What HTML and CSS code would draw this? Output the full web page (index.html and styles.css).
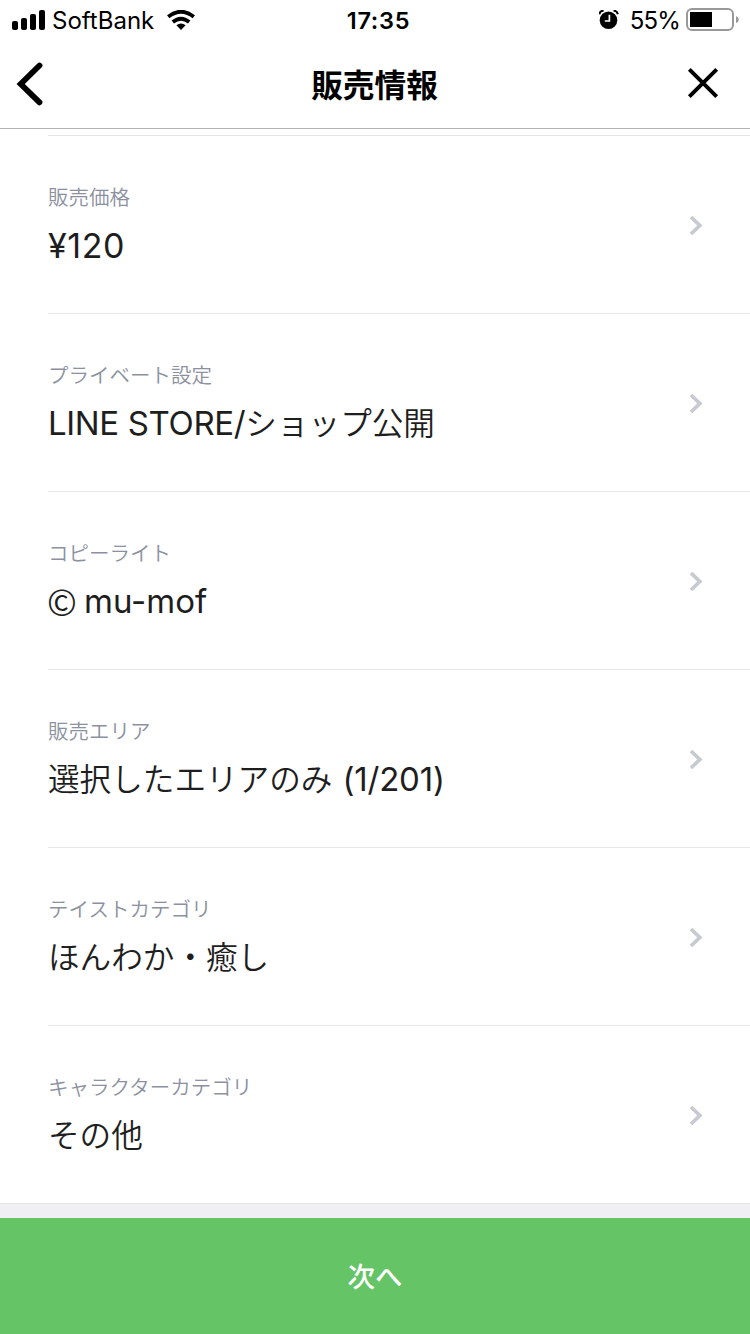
FILE: index.html
```html
<!DOCTYPE html>
<html lang="ja">
<head>
<meta charset="utf-8">
<title>販売情報</title>
<link rel="stylesheet" href="styles.css">
</head>
<body>
<div class="screen">
  <div class="status">
    <div class="status-left">
      <svg class="signal" width="34" height="20" viewBox="0 0 34 20"><rect x="0" y="11" width="6" height="9" rx="2"/><rect x="9" y="8" width="6" height="12" rx="2"/><rect x="18" y="4" width="6" height="16" rx="2"/><rect x="27" y="0" width="6" height="20" rx="2"/></svg>
      <span class="carrier">SoftBank</span>
      <svg class="wifi" width="28" height="20" viewBox="0 0 28 20"><g fill="none" stroke="#000" stroke-width="3.8"><path d="M1.2 6.7Q14 -3.3 26.8 6.7"/><path d="M5.8 12Q14 5.4 22.2 12"/></g><path d="M9.4 15.3Q14 11.6 18.6 15.3L14 20Z"/></svg>
    </div>
    <span class="time">17:35</span>
    <div class="status-right">
      <svg class="alarm" width="20" height="20" viewBox="0 0 20 20"><circle cx="9.5" cy="10.2" r="8.8"/><path d="M0.3 4.2Q1 .8 4.7.6M18.9 4.2Q18.2 .8 14.5.6" fill="none" stroke="#000" stroke-width="2"/><path d="M10.4 4.8V11H5.8" fill="none" stroke="#fff" stroke-width="1.7"/></svg>
      <span class="percent">55%</span>
      <svg class="battery" width="53" height="24" viewBox="0 0 53 24"><rect x="1" y="1" width="46" height="21" rx="5" fill="#fff" stroke="#999" stroke-width="2"/><rect x="4" y="4" width="22" height="15"/><path d="M50 8Q52.8 9 52.8 11.5T50 15Z" fill="#999"/></svg>
    </div>
  </div>
  <header class="header">
    <svg class="back" width="28" height="44" viewBox="0 0 28 44"><path d="M23.5 3.5L4.7 22 23.5 40.3" fill="none" stroke="#000" stroke-width="5.8" stroke-linecap="round"/></svg>
    <h1 class="title">販売情報</h1>
    <svg class="close" width="32" height="32" viewBox="0 0 32 32"><path d="M2.3 2.3L29.7 29.7M29.7 2.3L2.3 29.7" stroke="#000" stroke-width="3.9"/></svg>
  </header>
  <main class="list">
    <div class="row"><div><div class="label">販売価格</div><div class="value"><span class="latin price">¥120</span></div></div><svg class="chevron" width="14" height="20" viewBox="0 0 14 20"><path d="M2 2L10.8 10.5 2 19"/></svg></div>
    <div class="row"><div><div class="label">プライベート設定</div><div class="value"><span class="latin store">LINE STORE/</span>ショップ公開</div></div><svg class="chevron" width="14" height="20" viewBox="0 0 14 20"><path d="M2 2L10.8 10.5 2 19"/></svg></div>
    <div class="row"><div><div class="label">コピーライト</div><div class="value"><span class="copyright">©</span><span class="latin">mu-mof</span></div></div><svg class="chevron" width="14" height="20" viewBox="0 0 14 20"><path d="M2 2L10.8 10.5 2 19"/></svg></div>
    <div class="row"><div><div class="label">販売エリア</div><div class="value">選択したエリアのみ<span class="latin area">&nbsp;(1/201)</span></div></div><svg class="chevron" width="14" height="20" viewBox="0 0 14 20"><path d="M2 2L10.8 10.5 2 19"/></svg></div>
    <div class="row"><div><div class="label">テイストカテゴリ</div><div class="value">ほんわか・癒し</div></div><svg class="chevron" width="14" height="20" viewBox="0 0 14 20"><path d="M2 2L10.8 10.5 2 19"/></svg></div>
    <div class="row"><div><div class="label">キャラクターカテゴリ</div><div class="value">その他</div></div><svg class="chevron" width="14" height="20" viewBox="0 0 14 20"><path d="M2 2L10.8 10.5 2 19"/></svg></div>
  </main>
  <div class="gap"></div>
  <button class="next">次へ</button>
</div>
</body>
</html>
```
FILE: styles.css
```css
* { box-sizing: border-box; }
body { margin: 0; background: #fff; font-family: Inter, "Noto Sans CJK JP", sans-serif; }
svg { display: block; flex: none; }
.screen { width: 750px; height: 1334px; display: flex; flex-direction: column; overflow: hidden; }
.status { height: 40px; display: grid; grid-template-columns: 1fr auto 1fr; align-items: center; padding: 0 11px 0 12px; font-size: 24px; line-height: 38px; color: #000; }
.status-left, .status-right { display: flex; align-items: center; }
.status-right { justify-content: flex-end; }
.carrier { margin-left: 6px; padding-top: 2px; letter-spacing: 0; }
.wifi { margin-left: 13px; }
.time { font-weight: 600; font-size: 23.5px; letter-spacing: 0.7px; padding: 2px 0 0 6px; }
.percent { margin: 0 6px 0 11px; padding-top: 2px; font-size: 24px; letter-spacing: -0.8px; }
.header { height: 89px; display: grid; grid-template-columns: 1fr auto 1fr; align-items: center; padding: 0 31px 0 16px; border-bottom: 1px solid #b2b2b2; }
.title { margin: 0; padding: 0 0 2px 14px; font-size: 31.7px; font-weight: 700; line-height: 40px; font-family: "Noto Sans CJK JP", sans-serif; }
.close { justify-self: end; margin-bottom: 2px; }
.list { margin-left: 48px; border-top: 1px solid #e5e5e5; margin-top: 6px; }
.row { height: 178px; display: flex; justify-content: space-between; align-items: flex-start; padding: 45px 47px 0 0; border-bottom: 1px solid #e8e8ea; }
.row:last-child { border-bottom: 0; height: 177px; }
.label { font-family: "Noto Sans CJK JP", sans-serif; font-size: 20.5px; font-weight: 350; line-height: 30px; color: #8c919f; }
.value { font-family: "Noto Sans CJK JP", sans-serif; font-size: 31.6px; font-weight: 350; line-height: 46px; height: 46px; margin-top: 9px; color: #1e1e1e; white-space: nowrap; }
.latin { font-family: Inter, sans-serif; font-size: 33px; font-weight: 400; line-height: 40px; }
.price { font-size: 34px; letter-spacing: 0.6px; vertical-align: -1px; }
.store { letter-spacing: -0.35px; }
.area { letter-spacing: -0.2px; margin-left: 1px; }
.copyright { display: inline-block; width: 36px; margin-left: -1px; padding-right: 7px; margin-right: 1px; font-size: 36px; line-height: 30px; vertical-align: -3px; }
.chevron { margin-top: 34px; fill: none; stroke: #c8cad1; stroke-width: 3.8; overflow: visible; }
.gap { height: 15px; background: #efeff4; border-top: 1px solid #e5e5e8; }
.next { height: 116px; border: 0; padding: 0 0 2px; background: #65c466; color: #fff; font: 500 27.5px/114px "Noto Sans CJK JP", sans-serif; }
```
